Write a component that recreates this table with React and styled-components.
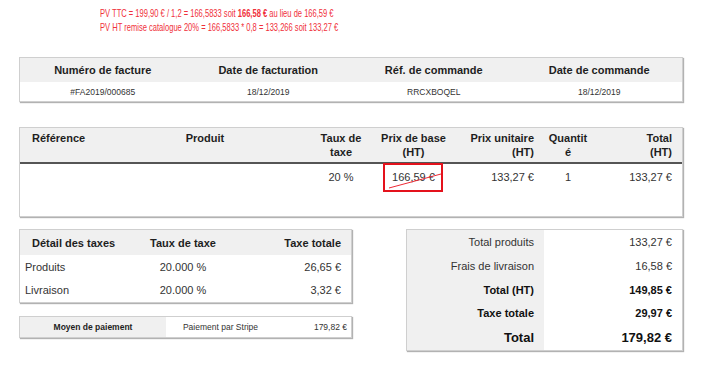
import React from 'react';
import styled, { createGlobalStyle } from 'styled-components';

const Global = createGlobalStyle`
  html, body { margin: 0; padding: 0; background: #fff; }
  body { font-family: "Liberation Sans", Arial, sans-serif; color: #333; }
  * { box-sizing: border-box; }
`;

const Page = styled.div`
  width: 709px;
  height: 367px;
  padding: 6px 26px 0 19px;
  display: flex;
  flex-direction: column;
  overflow: hidden;
`;

const Note = styled.div`
  margin-left: 81px;
  font-family: "Liberation Sans", Arial, sans-serif;
  font-size: 10.5px;
  line-height: 14px;
  color: #f0303a;
  white-space: nowrap;
  transform: scaleX(0.72);
  transform-origin: left top;
  b { font-weight: 700; }
`;

const Box = styled.div`
  border: 1px solid #cfcfcf;
  box-shadow: 1px 1px 1px rgba(0, 0, 0, 0.3);
  background: #fff;
  margin-top: ${p => p.$mt || 0}px;
  width: ${p => (p.$w ? `${p.$w}px` : 'auto')};
`;

const Grid = styled.div`
  display: grid;
  grid-template-columns: ${p => p.$cols};
`;

const HeadCell = styled.div`
  background: #f0f0f0;
  font-weight: 700;
  font-size: ${p => p.$fs || 11}px;
  line-height: ${p => p.$lh || 14}px;
  color: #1e1e1e;
  height: ${p => p.$h}px;
  padding: ${p => p.$pad || '0'};
  text-align: ${p => p.$align || 'center'};
  display: flex;
  flex-direction: column;
  justify-content: ${p => (p.$top ? 'flex-start' : 'center')};
  align-items: ${p => ({ left: 'flex-start', right: 'flex-end', center: 'center' }[p.$align || 'center'])};
  border-bottom: ${p => (p.$rule ? '2px solid #555' : 'none')};
  word-break: ${p => (p.$breakAll ? 'break-all' : 'normal')};
`;

const Cell = styled.div`
  position: relative;
  font-size: ${p => p.$fs || 11}px;
  font-weight: ${p => (p.$bold ? 700 : 400)};
  line-height: 14px;
  color: ${p => (p.$bold ? '#111' : '#333')};
  height: ${p => p.$h}px;
  padding: ${p => p.$pad || '0'};
  background: ${p => (p.$gray ? '#f0f0f0' : 'transparent')};
  display: flex;
  align-items: ${p => (p.$top ? 'flex-start' : 'center')};
  justify-content: ${p => ({ left: 'flex-start', right: 'flex-end', center: 'center' }[p.$align || 'center'])};
  white-space: nowrap;
`;

const StruckBox = styled.div`
  position: absolute;
  left: 10px;
  top: -1px;
  width: 60px;
  height: 29px;
  border: 2px solid #e4121c;
  pointer-events: none;
`;

const Strike = styled.svg`
  position: absolute;
  left: -2px;
  top: -2px;
`;

const Bottom = styled.div`
  margin-top: 12px;
  display: flex;
  justify-content: space-between;
  align-items: flex-start;
`;

const LeftCol = styled.div`
  width: 333px;
  display: flex;
  flex-direction: column;
  gap: 13px;
`;

const invoiceHead = ['Numéro de facture', 'Date de facturation', 'Réf. de commande', 'Date de commande'];
const invoiceBody = ['#FA2019/000685', '18/12/2019', 'RRCXBOQEL', '18/12/2019'];

const prodCols = [
  { w: 81, h: ['Référence'], align: 'left', pad: '3px 0 0 12px' },
  { w: 218, h: ['Produit'], align: 'center', pad: '3px 10px 0 0' },
  { w: 54, h: ['Taux de', 'taxe'], align: 'center', pad: '3px 10px 0 0' },
  { w: 91, h: ['Prix de base', '(HT)'], align: 'center', pad: '3px 10px 0 0' },
  { w: 84, h: ['Prix unitaire', '(HT)'], align: 'right', pad: '3px 14px 0 0' },
  { w: 50, h: ['Quantité'], align: 'center', pad: '3px 10px 0 0', breakAll: true },
  { w: 84, h: ['Total', '(HT)'], align: 'right', pad: '3px 10px 0 0' },
];
const prodBody = ['', '', '20 %', '166,59 €', '133,27 €', '1', '133,27 €'];

const taxRows = [
  ['Produits', '20.000 %', '26,65 €'],
  ['Livraison', '20.000 %', '3,32 €'],
];

const totals = [
  { l: 'Total produits', v: '133,27 €', h: 24.5 },
  { l: 'Frais de livraison', v: '16,58 €', h: 23.5 },
  { l: 'Total (HT)', v: '149,85 €', h: 23.5, bold: true },
  { l: 'Taxe totale', v: '29,97 €', h: 23.5, bold: true },
  { l: 'Total', v: '179,82 €', h: 25, bold: true, fs: 13 },
];

export default function App() {
  return (
    <>
      <Global />
      <Page>
        <Note>
          <div>PV TTC = 199,90 € / 1,2 = 166,5833 soit <b>166,58 €</b> au lieu de 166,59 €</div>
          <div>PV HT remise catalogue 20% = 166,5833 * 0,8 = 133,266 soit 133,27 €</div>
        </Note>

        <Box $mt={23}>
          <Grid $cols="repeat(4, 1fr)">
            {invoiceHead.map(t => (
              <HeadCell key={t} $h={24}>{t}</HeadCell>
            ))}
            {invoiceBody.map((t, i) => (
              <Cell key={i} $h={19} $fs={8.5}>{t}</Cell>
            ))}
          </Grid>
        </Box>

        <Box $mt={25}>
          <Grid $cols={prodCols.map(c => `${c.w}px`).join(' ')}>
            {prodCols.map((c, i) => (
              <HeadCell key={i} $h={36} $top $rule $align={c.align} $pad={c.pad} $breakAll={c.breakAll}>
                {c.h.map(line => (
                  <span key={line}>{line}</span>
                ))}
              </HeadCell>
            ))}
            {prodBody.map((t, i) => (
              <Cell key={i} $h={52} $top $align={prodCols[i].align} $pad={prodCols[i].pad.replace('3px', '6px')}>
                {t}
                {i === 3 && (
                  <StruckBox>
                    <Strike width="60" height="29" viewBox="0 0 60 29">
                      <line x1="6" y1="25" x2="58" y2="11" stroke="#ee2a36" strokeWidth="1" />
                    </Strike>
                  </StruckBox>
                )}
              </Cell>
            ))}
          </Grid>
        </Box>

        <Bottom>
          <LeftCol>
            <Box>
              <Grid $cols="110px 106px 1fr">
                <HeadCell $h={25} $align="left" $pad="0 0 0 12px">Détail des taxes</HeadCell>
                <HeadCell $h={25}>Taux de taxe</HeadCell>
                <HeadCell $h={25} $align="right" $pad="0 10px 0 0">Taxe totale</HeadCell>
                {taxRows.map(r => (
                  <React.Fragment key={r[0]}>
                    <Cell $h={23.5} $align="left" $pad="0 0 0 5px">{r[0]}</Cell>
                    <Cell $h={23.5}>{r[1]}</Cell>
                    <Cell $h={23.5} $align="right" $pad="0 10px 0 0">{r[2]}</Cell>
                  </React.Fragment>
                ))}
              </Grid>
            </Box>
            <Box>
              <Grid $cols="146px 109px 1fr">
                <HeadCell $h={20} $fs={8.5}>Moyen de paiement</HeadCell>
                <Cell $h={20} $fs={8.5}>Paiement par Stripe</Cell>
                <Cell $h={20} $fs={8.5} $align="right" $pad="0 4px 0 0">179,82 €</Cell>
              </Grid>
            </Box>
          </LeftCol>

          <Box $w={277}>
            <Grid $cols="137px 1fr">
              {totals.map(r => (
                <React.Fragment key={r.l}>
                  <Cell $gray $h={r.h} $bold={r.bold} $fs={r.fs} $align="right" $pad="0 10px 0 0">{r.l}</Cell>
                  <Cell $h={r.h} $bold={r.bold} $fs={r.fs} $align="right" $pad="0 10px 0 0">{r.v}</Cell>
                </React.Fragment>
              ))}
            </Grid>
          </Box>
        </Bottom>
      </Page>
    </>
  );
}
